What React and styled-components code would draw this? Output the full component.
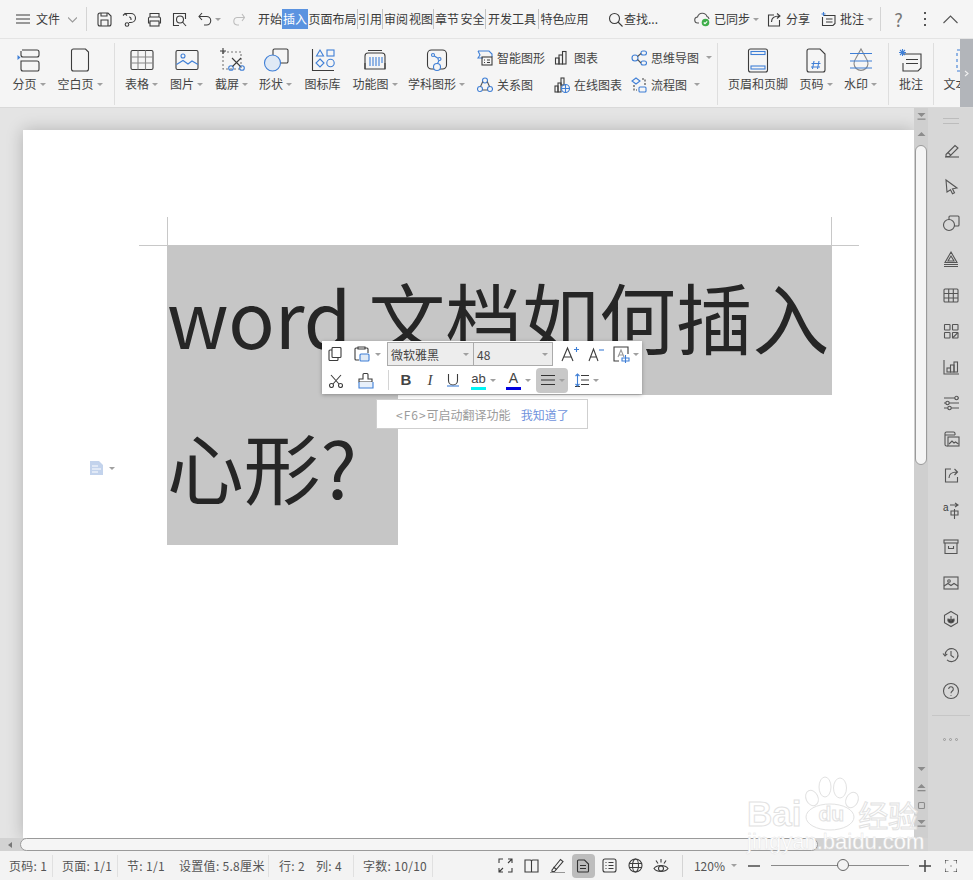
import React from "react";
import styled, { createGlobalStyle } from "styled-components";

const BLUE = "#3f7fd6";
const FONT = `"Noto Sans CJK SC", "Noto Sans", sans-serif`;

const GlobalStyle = createGlobalStyle`
  html, body { margin: 0; padding: 0; height: 100%; }
  body { font-family: ${FONT}; font-size: 12px; color: #3a3a3a; overflow: hidden; }
  #root { height: 100%; }
`;

const Window = styled.div`
  position: relative;
  width: 973px;
  height: 880px;
  display: flex;
  flex-direction: column;
  overflow: hidden;
  background: #f5f5f5;
`;

const IconSvg = styled.svg`
  display: block;
  flex: none;
  fill: none;
  stroke: ${(p) => p.$c || "#3c3c3c"};
  stroke-width: ${(p) => p.$sw || 1.1};
`;
const Ic = ({ s = 16, c, sw, children }) => (
  <IconSvg width={s} height={s} viewBox={`0 0 ${s} ${s}`} $c={c} $sw={sw}>
    {children}
  </IconSvg>
);

const Caret = styled.span`
  flex: none;
  display: inline-block;
  width: 0;
  height: 0;
  margin-left: ${(p) => p.$ml ?? 3}px;
  border-left: 3px solid transparent;
  border-right: 3px solid transparent;
  border-top: 3px solid #a0a0a0;
`;

/* title bar */
const TopBar = styled.div`
  height: 38px;
  flex: none;
  display: flex;
  align-items: center;
  padding-left: 16px;
  padding-right: 15px;
  border-bottom: 1px solid #e4e4e4;
  background: #f5f5f5;
`;
const Gap = styled.span`
  flex: none;
  width: ${(p) => p.$w}px;
  height: ${(p) => p.$h || 0}px;
`;
const VRule = styled.span`
  flex: none;
  width: 1px;
  height: ${(p) => p.$h || 24}px;
  background: #d4d4d4;
`;
const TopText = styled.span`
  line-height: 18px;
  white-space: nowrap;
  color: ${(p) => p.$c || "#3a3a3a"};
`;
const HelpMark = styled.span`
  flex: none;
  width: 13px;
  text-align: center;
  font-size: 18px;
  line-height: 20px;
  color: #777;
`;
const MoreDots = styled.span`
  flex: none;
  width: 4px;
  display: flex;
  flex-direction: column;
  align-items: center;
  gap: 4px;
`;
const MoreDot = styled.span`
  width: 2px;
  height: 2px;
  background: #555;
`;
const QuickIcons = styled.div`
  display: flex;
  gap: 10px;
`;
const Tabs = styled.div`
  display: flex;
  align-items: center;
`;
const Tab = styled.span`
  width: ${(p) => p.$w}px;
  height: 20px;
  line-height: 20px;
  text-align: center;
  white-space: nowrap;
  box-sizing: border-box;
  color: ${(p) => (p.$active ? "#fff" : "#3a3a3a")};
  background: ${(p) => (p.$active ? "#5b93e0" : "transparent")};
  border-right: ${(p) => (p.$sep ? "1px solid #c4c4c4" : "none")};
`;
const TopRight = styled.div`
  margin-left: auto;
  display: flex;
  align-items: center;
`;

/* ribbon */
const Ribbon = styled.div`
  position: relative;
  height: 69px;
  flex: none;
  display: flex;
  padding-left: 8px;
  overflow: hidden;
  background: #f5f5f5;
  border-bottom: 1px solid #d9d9d9;
  box-sizing: border-box;
`;
const RibbonRule = styled.span`
  flex: none;
  width: 1px;
  height: 62px;
  margin: 4px ${(p) => p.$r}px 0 ${(p) => p.$l}px;
  background: #dedede;
`;
const LargeBtn = styled.div`
  flex: none;
  width: ${(p) => p.$w}px;
  padding-top: 8px;
  display: flex;
  flex-direction: column;
  align-items: center;
`;
const LargeLabel = styled.span`
  margin-top: 2px;
  height: 18px;
  line-height: 18px;
  display: flex;
  align-items: center;
  white-space: nowrap;
  color: #444;
`;
const SmallGrid = styled.div`
  flex: none;
  display: grid;
  grid-template-columns: 77px 77px 81px;
  grid-auto-rows: 27px;
  padding: 5px 0 0 7px;
`;
const SmallBtn = styled.div`
  display: flex;
  align-items: center;
  gap: 4px;
  white-space: nowrap;
  color: #444;
`;
const RibbonNext = styled.div`
  position: absolute;
  top: 0;
  right: 0;
  bottom: 0;
  width: 13px;
  display: flex;
  align-items: center;
  justify-content: center;
  background: #b2b5ba;
`;

/* work area */
const Main = styled.div`
  flex: 1;
  min-height: 0;
  display: flex;
`;
const Center = styled.div`
  flex: 1;
  min-width: 0;
  display: flex;
  flex-direction: column;
`;
const CenterTop = styled.div`
  flex: 1;
  min-height: 0;
  display: flex;
`;
const DocArea = styled.div`
  flex: 1;
  min-width: 0;
  padding: 22px 0 0 23px;
  overflow: hidden;
  background: #e4e4e4;
`;
const Page = styled.div`
  position: relative;
  height: 100%;
  padding: 115px 0 0 144px;
  box-sizing: border-box;
  background: #fff;
  box-shadow: 0 0 16px rgba(0, 0, 0, 0.22);
`;
const Selection = styled.div`
  position: relative;
  width: 665px;
  font-size: 76.8px;
  line-height: 142px;
  color: #262626;
  white-space: nowrap;
`;
const SelLine = styled.div`
  width: ${(p) => p.$w}px;
  height: 150px;
  background: #c6c6c6;
`;
const CropMark = styled.span`
  position: absolute;
  background: #c8c8c8;
  top: ${(p) => p.$top}px;
  left: ${(p) => p.$left}px;
  width: ${(p) => p.$w}px;
  height: ${(p) => p.$h}px;
`;
const ParaMark = styled.div`
  position: absolute;
  left: 67px;
  top: 331px;
  display: flex;
  align-items: center;
`;

/* floating toolbar */
const Float = styled.div`
  position: absolute;
  left: 299px;
  top: 211px;
  width: 320px;
  height: 53px;
  box-sizing: border-box;
  padding-left: 6px;
  display: flex;
  flex-direction: column;
  background: #fff;
  box-shadow: 0 1px 4px rgba(0, 0, 0, 0.3);
`;
const FloatRow = styled.div`
  height: 26px;
  display: flex;
  align-items: center;
`;
const Select = styled.div`
  width: ${(p) => p.$w}px;
  height: 24px;
  box-sizing: border-box;
  padding: 0 4px 0 3px;
  display: flex;
  align-items: center;
  justify-content: space-between;
  background: #ededed;
  border: 1px solid #ababab;
  border-left-width: ${(p) => (p.$joined ? 0 : 1)}px;
  color: #444;
`;
const ToolGlyph = styled.span`
  flex: none;
  width: 14px;
  text-align: center;
  font-family: ${(p) => (p.$bold ? `"Liberation Sans", sans-serif` : `"Liberation Serif", serif`)};
  font-size: 15px;
  line-height: 18px;
  color: #444;
  font-weight: ${(p) => (p.$bold ? 700 : 400)};
  font-style: ${(p) => (p.$italic ? "italic" : "normal")};
`;
const ColorTool = styled.span`
  flex: none;
  width: 15px;
  height: 19px;
  box-sizing: border-box;
  text-align: center;
  font-family: "Liberation Sans", sans-serif;
  font-size: ${(p) => p.$fs || 14}px;
  line-height: 15px;
  color: #444;
  border-bottom: 3px solid ${(p) => p.$bar};
`;
const ActiveTool = styled.span`
  flex: none;
  width: 32px;
  height: 25px;
  box-sizing: border-box;
  padding-left: 5px;
  display: flex;
  align-items: center;
  border-radius: 4px;
  background: #c8c8c8;
`;
const Hint = styled.div`
  position: absolute;
  left: 353px;
  top: 269px;
  width: 212px;
  height: 30px;
  box-sizing: border-box;
  padding-left: 19px;
  display: flex;
  align-items: center;
  background: #fff;
  border: 1px solid #cfcfcf;
  color: #9b9b9b;
  white-space: nowrap;
`;
const HintKey = styled.span`
  letter-spacing: 1px;
`;
const HintLink = styled.span`
  margin-left: 10px;
  color: #6f92dc;
`;

/* scroll bars */
const VScroll = styled.div`
  flex: none;
  width: 14px;
  display: flex;
  flex-direction: column;
  align-items: center;
  background: #cfcfcf;
`;
const VThumb = styled.div`
  width: 12px;
  height: 320px;
  margin-top: 6px;
  flex: none;
  box-sizing: border-box;
  border: 1px solid #9a9a9a;
  border-radius: 7px;
  background: #f5f5f5;
`;
const VArrows = styled.div`
  margin-top: auto;
  padding-bottom: 10px;
  display: flex;
  flex-direction: column;
  align-items: center;
  gap: 9px;
`;
const HScroll = styled.div`
  height: 13px;
  flex: none;
  display: flex;
  align-items: center;
  padding-left: 7px;
  background: #d2d2d2;
`;
const HThumb = styled.div`
  width: 798px;
  height: 13px;
  margin-left: 7px;
  box-sizing: border-box;
  border: 1px solid #9a9a9a;
  border-radius: 7px;
  background: #f5f5f5;
`;

/* right side bar */
const SideBar = styled.div`
  flex: none;
  width: 45px;
  display: flex;
  flex-direction: column;
  align-items: center;
  background: #d7d7d7;
`;
const SideHandle = styled.div`
  width: 16px;
  height: 4px;
  margin: 10px 0 18px;
  border-top: 1px solid #bcbcbc;
  border-bottom: 1px solid #bcbcbc;
`;
const SideIcons = styled.div`
  display: flex;
  flex-direction: column;
  align-items: center;
  gap: 18px;
`;
const SideRule = styled.div`
  width: 38px;
  height: 1px;
  margin: 15px 0 22px;
  background: #c6c6c6;
`;
const SideDots = styled.div`
  display: flex;
  gap: 3px;
`;
const SideDot = styled.span`
  width: 3px;
  height: 3px;
  box-sizing: border-box;
  border: 1px solid #999;
  border-radius: 50%;
`;

/* status bar */
const StatusBar = styled.div`
  height: 29px;
  flex: none;
  display: flex;
  align-items: center;
  background: #f3f3f3;
  color: #555;
`;
const StatusCell = styled.span`
  flex: none;
  width: ${(p) => p.$w}px;
  height: 22px;
  line-height: 22px;
  box-sizing: border-box;
  padding-left: ${(p) => p.$l ?? 9}px;
  letter-spacing: 0.3px;
  white-space: nowrap;
  border-right: ${(p) => (p.$sep ? "1px solid #e0e0e0" : "none")};
`;
const StatusRight = styled.div`
  margin-left: auto;
  padding-right: 16px;
  display: flex;
  align-items: center;
`;
const ViewBtn = styled.span`
  flex: none;
  width: ${(p) => (p.$active ? 23 : 15)}px;
  height: ${(p) => (p.$active ? 24 : 16)}px;
  display: flex;
  align-items: center;
  justify-content: center;
  border-radius: 4px;
  background: ${(p) => (p.$active ? "#bdbdbd" : "transparent")};
`;
const Slider = styled.div`
  position: relative;
  width: 138px;
  height: 1px;
  background: #8a8a8a;
`;
const SliderKnob = styled.span`
  position: absolute;
  left: 66px;
  top: -6px;
  width: 12px;
  height: 12px;
  box-sizing: border-box;
  border: 1px solid #666;
  border-radius: 50%;
  background: #f3f3f3;
`;

/* watermark */
const Watermark = styled.div`
  position: absolute;
  left: 747px;
  top: 775px;
  width: 172px;
  height: 78px;
  pointer-events: none;
`;
const WmLine = styled.div`
  position: relative;
  display: flex;
  align-items: center;
  height: 30px;
  margin-top: 24px;
`;
const WmText = styled.span`
  font-family: ${(p) => p.$font || `"Liberation Sans", sans-serif`};
  font-size: ${(p) => p.$fs}px;
  font-weight: ${(p) => p.$weight || 700};
  line-height: 30px;
  color: #fff;
  white-space: nowrap;
  -webkit-text-stroke: 1px #e2e2e2;
`;
const WmUrl = styled.div`
  position: relative;
  margin-top: 2px;
  font-family: "Liberation Sans", sans-serif;
  font-size: 22px;
  line-height: 22px;
  color: #fff;
  white-space: nowrap;
  -webkit-text-stroke: 0.4px #e2e2e2;
`;
const WmPaw = styled.svg`
  position: absolute;
  left: 50px;
  top: 0;
`;

const Tri = ({ up, double }) => (
  <Ic s={9} c="none">
    <path d={up ? "M4.5 2l4 4h-8z" : "M4.5 6l4-4h-8z"} fill="#8c8c8c" transform={double ? "translate(0 -1)" : undefined} />
    {double && <rect x="0.5" y={up ? 7 : 6.5} width="8" height="1.3" fill="#8c8c8c" />}
  </Ic>
);

const scissors = (
  <>
    <circle cx="3.5" cy="12.5" r="2" />
    <circle cx="12.5" cy="12.5" r="2" />
    <path d="M5 11L13 2M11 11L3 2" />
  </>
);

const sideIcons = [
  <><path d="M3 15h14" /><path d="M4 12.5L13 3.5l3 2.5-8.5 8.5H4z" /><path d="M6 10.5l3 3" /></>,
  <path d="M4 2l11 8-4.5.8 2 4-2 1-2-4L5 14z" />,
  <><rect x="7" y="2" width="10" height="10" rx="1" /><circle cx="7" cy="11" r="5.5" fill="#d7d7d7" /></>,
  <><path d="M9 2l6 10.5H3z" /><path d="M9 6l3 5H6z" /><path d="M2 14.5h14M2 16.5h14" /></>,
  <><rect x="2" y="3" width="14" height="13" rx="1" /><path d="M2 7.5h14M2 12h14M6.7 3v13M11.3 3v13" /></>,
  <><rect x="2.5" y="2.5" width="5.5" height="5.5" rx=".5" /><rect x="10.5" y="2.5" width="5.5" height="5.5" rx=".5" /><rect x="2.5" y="10.5" width="5.5" height="5.5" rx=".5" /><rect x="10.5" y="10.5" width="5.5" height="5.5" rx=".5" /><path d="M10.5 16l5.5-5.5" /></>,
  <><path d="M2 2v14h15" /><rect x="5" y="10" width="3.5" height="4" /><rect x="8.5" y="7" width="3.5" height="7" /><rect x="12" y="4" width="3.5" height="10" /></>,
  <><path d="M2 4h11M16 4h1M2 9h2M7 9h10M2 14h4M9 14h8" /><circle cx="14.5" cy="4" r="1.7" /><circle cx="5.5" cy="9" r="1.7" /><circle cx="7.5" cy="14" r="1.7" /></>,
  <><path d="M3 5V3.5A1.5 1.5 0 0 1 4.500 2h7A1.500 1.500 0 0 1 13 3.500V5M3 5v9.500A1.500 1.500 0 0 0 4.500 16H6M3 5h10" /><rect x="6" y="7" width="11" height="9" /><path d="M7 14l3-3 2 2 1.500-1 3 2" /></>,
  <><path d="M9 3H3.500v13h12v-5" /><path d="M7 12c0-4 3-6 8-6M12.500 3l3 3-3 3" /></>,
  <><text x="1" y="9" fontSize="10" stroke="none" fill="#3c3c3c" fontFamily="Liberation Sans">a</text><path d="M8 3h8M13 1l3 2-3 2M9 9h7v4H9zM12.500 7v10" /></>,
  <><rect x="2" y="2" width="14" height="3" /><path d="M3 5v10.500h12V5M6.500 8v2.500h5V8" /></>,
  <><rect x="2" y="3" width="14" height="12" /><circle cx="7" cy="7" r="1.300" /><path d="M2 12l4-2.500 3 2 3-2 4 2.500" /></>,
  <><path d="M9 1.500l6.500 3.700v7.600L9 16.500l-6.500-3.700V5.200z" /><path d="M9 13c-2.500 0-3.500-2-3-4 1.500 0 2.500.8 3 2 .5-1.200 1.500-2 3-2 .5 2-.5 4-3 4zM9 6v4" fill="#3c3c3c" /></>,
  <><path d="M3 9a6.500 6.500 0 1 1 2 4.800" /><path d="M1 7.500L3 10l2.300-2.200M9 5v4.500l3 2" /></>,
  <><circle cx="9" cy="9" r="7.500" /><path d="M6.700 7a2.300 2.300 0 1 1 3.600 2c-.9.6-1.300 1-1.300 2.200M9 13v.8" /></>,
];

function App() {
  return (
    <Window>
      <GlobalStyle />
      <TopBar>
        <Ic s={14}><path d="M0 3h14M0 7h14M0 11h14" /></Ic>
        <Gap $w={6} />
        <TopText>文件</TopText>
        <Gap $w={8} />
        <Ic s={9} c="#999"><path d="M0 2.500l4.500 4.500L9 2.500" /></Ic>
        <Gap $w={9} />
        <VRule />
        <Gap $w={10} />
        <QuickIcons>
          <Ic s={15}><path d="M1 3a2 2 0 0 1 2-2h8l3 3v8a2 2 0 0 1-2 2H3a2 2 0 0 1-2-2zM4 1v3h6V1M4 14V8h7v6" /></Ic>
          <Ic s={15}><path d="M3 1.500h6a4.500 4.500 0 0 1 0 9H7M1 3.500l2-2 2 2" /><circle cx="5" cy="12.500" r="1.800" /><path d="M7 5a2 2 0 0 1 2 2v1" /></Ic>
          <Ic s={15}><path d="M3 5V1.500h9V5M3 11H1.500V6.500a1.500 1.500 0 0 1 1.500-1.500h9a1.500 1.500 0 0 1 1.500 1.500V11H12" /><rect x="3" y="9" width="9" height="5" /></Ic>
          <Ic s={15}><path d="M7 13.500H1.500v-12h12V7" /><circle cx="8" cy="7.500" r="3.500" /><path d="M10.500 10l3.500 4" /></Ic>
        </QuickIcons>
        <Gap $w={11} />
        <Ic s={14}><path d="M4 1L1 4.500 4 8" /><path d="M1 4.500h7.500a4.200 4.200 0 0 1 0 8.500H6" /></Ic>
        <Caret />
        <Gap $w={11} />
        <Ic s={13} c="#bdbdbd"><path d="M10 1l2.500 3.500L10 8" /><path d="M12.500 4.500H5a3.800 3.800 0 0 0 0 7.500h2" /></Ic>
        <Gap $w={13} />
        <Tabs>
          <Tab $w={24}>开始</Tab>
          <Tab $w={26} $active>插入</Tab>
          <Tab $w={50} $sep>页面布局</Tab>
          <Tab $w={25} $sep>引用</Tab>
          <Tab $w={26}>审阅</Tab>
          <Tab $w={25} $sep>视图</Tab>
          <Tab $w={26}>章节</Tab>
          <Tab $w={26} $sep>安全</Tab>
          <Tab $w={53} $sep>开发工具</Tab>
          <Tab $w={51}>特色应用</Tab>
        </Tabs>
        <Gap $w={18} />
        <Ic s={15}><circle cx="6.500" cy="6.500" r="5" /><path d="M10 10l4.500 4.500" /></Ic>
        <Gap $w={1} />
        <TopText>查找...</TopText>
        <TopRight>
          <Ic s={16} c="#555">
            <path d="M5 12H4a3 3 0 0 1-.5-6A5 5 0 0 1 13 5.500a3 3 0 0 1 2 2.500" />
            <circle cx="11.500" cy="11.500" r="3.800" fill="#3fae4a" stroke="none" />
            <path d="M9.800 11.500l1.200 1.200 2.200-2.300" stroke="#fff" />
          </Ic>
          <Gap $w={4} />
          <TopText>已同步</TopText>
          <Caret />
          <Gap $w={8} />
          <Ic s={15}><path d="M7 3H1.500v11h11V8" /><path d="M4.500 10c0-4 2.500-6 8-6M10 1.500l3 2.500-3 2.500" /></Ic>
          <Gap $w={4} />
          <TopText>分享</TopText>
          <Gap $w={11} />
          <Ic s={15}><path d="M3 3.500h11v8l-2 2H1.500V5M5 7h6.500M5 10h6.500" /><path d="M2.500 0v4M.5 2h4" stroke={BLUE} /></Ic>
          <Gap $w={4} />
          <TopText>批注</TopText>
          <Caret />
          <Gap $w={7} />
          <VRule />
          <Gap $w={11} />
          <HelpMark>?</HelpMark>
          <Gap $w={18} />
          <MoreDots>
            <MoreDot />
            <MoreDot />
            <MoreDot />
          </MoreDots>
          <Gap $w={16} />
          <Ic s={15} c="#555"><path d="M0.500 11l7-7 7 7" /></Ic>
        </TopRight>
      </TopBar>

      <Ribbon>
        <LargeBtn $w={42}>
          <Ic s={26}>
            <path d="M6 3h15a2 2 0 0 1 2 2v3a2 2 0 0 1-2 2H7a2 2 0 0 1-2-2V4" />
            <path d="M5 14h16a2 2 0 0 1 2 2v6a2 2 0 0 1-1 2H7a2 2 0 0 1-2-2z" />
            <path d="M1.500 8l3 2.500-3 2.500z" fill={BLUE} stroke="none" />
          </Ic>
          <LargeLabel>分页<Caret /></LargeLabel>
        </LargeBtn>
        <LargeBtn $w={60}>
          <Ic s={26}><path d="M4.500 4a2 2 0 0 1 2-2h12l3 3v17a2 2 0 0 1-2 2h-13a2 2 0 0 1-2-2z" /></Ic>
          <LargeLabel>空白页<Caret /></LargeLabel>
        </LargeBtn>
        <RibbonRule $l={4} $r={5} />
        <LargeBtn $w={43}>
          <Ic s={26}>
            <rect x="2" y="3.500" width="22" height="19" rx="1.500" />
            <path d="M2 10h22M2 16h22M9 3.500v19M16.500 3.500v19" stroke="#888" />
          </Ic>
          <LargeLabel>表格<Caret /></LargeLabel>
        </LargeBtn>
        <LargeBtn $w={47}>
          <Ic s={26}>
            <rect x="2" y="3.500" width="22" height="19" rx="1.500" />
            <circle cx="9" cy="9" r="2" stroke={BLUE} />
            <path d="M2.500 17.500l6.500-4 5 3.500 4-3 6 3.500" stroke={BLUE} />
          </Ic>
          <LargeLabel>图片<Caret /></LargeLabel>
        </LargeBtn>
        <LargeBtn $w={43}>
          <Ic s={26}>
            <rect x="4" y="5" width="18" height="17" strokeDasharray="2 2" stroke="#777" />
            <path d="M4 1v6M1 4h6" />
            <circle cx="12" cy="21" r="2.300" stroke={BLUE} />
            <circle cx="23" cy="21" r="2.300" stroke={BLUE} />
            <path d="M13.500 19.500L22 11M21.500 19.500L13 11" />
          </Ic>
          <LargeLabel>截屏<Caret /></LargeLabel>
        </LargeBtn>
        <LargeBtn $w={45}>
          <Ic s={26}>
            <path d="M10 9V3.500A1.500 1.500 0 0 1 11.500 2h12A1.500 1.500 0 0 1 25 3.500v11a1.500 1.500 0 0 1-1.500 1.500H18" />
            <circle cx="9.500" cy="16" r="8" fill="#dfe9f5" stroke={BLUE} />
          </Ic>
          <LargeLabel>形状<Caret /></LargeLabel>
        </LargeBtn>
        <LargeBtn $w={49}>
          <Ic s={26}>
            <path d="M2.500 2v21.500H24" />
            <path d="M10 3l3.500 6h-7z" stroke={BLUE} />
            <rect x="17" y="3" width="7" height="6" stroke={BLUE} />
            <path d="M10 12l4 4-4 4-4-4z" stroke={BLUE} />
            <circle cx="20.500" cy="16" r="3.700" stroke={BLUE} />
          </Ic>
          <LargeLabel>图标库</LargeLabel>
        </LargeBtn>
        <LargeBtn $w={56}>
          <Ic s={26}>
            <path d="M3 22v-13a3 3 0 0 1 3-3h14a3 3 0 0 1 3 3v13" />
            <path d="M3 16v6h20v-6M6 3.500h14" />
            <path d="M8 10v9M11 10v9M14 10v9M17 10v9M20 10v6" stroke={BLUE} />
          </Ic>
          <LargeLabel>功能图<Caret /></LargeLabel>
        </LargeBtn>
        <LargeBtn $w={67}>
          <Ic s={26}>
            <rect x="3.500" y="3" width="19" height="19" rx="4" />
            <circle cx="9" cy="8" r="1.500" stroke={BLUE} />
            <circle cx="15.500" cy="12" r="1.500" stroke={BLUE} />
            <circle cx="13" cy="20" r="3.500" fill="#f5f5f5" stroke={BLUE} />
            <path d="M10.300 9L14 11.200M15 13.500L13.500 16.500" stroke={BLUE} />
          </Ic>
          <LargeLabel>学科图形<Caret /></LargeLabel>
        </LargeBtn>

        <SmallGrid>
          <SmallBtn>
            <Ic s={16}>
              <path d="M1 1h11l3 3v3M1 1l2 4-2 3h5" stroke={BLUE} />
              <rect x="5" y="7" width="10" height="8" />
              <path d="M7 10h1M10 10h3M7 12.500h1M10 12.500h3" />
            </Ic>
            智能图形
          </SmallBtn>
          <SmallBtn>
            <Ic s={16}>
              <rect x="1.500" y="8" width="3.500" height="6" />
              <rect x="5" y="5" width="3.500" height="9" />
              <rect x="8.500" y="1.500" width="3.500" height="12.500" />
            </Ic>
            图表
          </SmallBtn>
          <SmallBtn>
            <Ic s={16} c={BLUE}>
              <circle cx="4" cy="8" r="3" />
              <rect x="10" y="1" width="5.500" height="4" rx="2" />
              <rect x="10" y="11" width="5.500" height="4" rx="2" />
              <path d="M6.500 6.500L10 3.500M6.500 9.500L10 13" stroke="#555" />
            </Ic>
            思维导图<Caret />
          </SmallBtn>
          <SmallBtn>
            <Ic s={16} c={BLUE}>
              <circle cx="8" cy="3.500" r="2.500" />
              <circle cx="3" cy="12" r="2.500" />
              <circle cx="13" cy="12" r="2.500" />
              <path d="M5.800 4.500L3.500 9.500M10.200 4.500L12.500 9.500M5.500 13h5" stroke="#555" />
            </Ic>
            关系图
          </SmallBtn>
          <SmallBtn>
            <Ic s={16}>
              <rect x="1" y="9" width="3" height="6" />
              <rect x="4" y="6" width="3" height="9" />
              <rect x="7" y="1" width="3" height="7" />
              <circle cx="11.500" cy="11.500" r="4" stroke={BLUE} />
              <path d="M7.500 11.500h8M11.500 7.500v8" stroke={BLUE} />
            </Ic>
            在线图表
          </SmallBtn>
          <SmallBtn>
            <Ic s={16}>
              <path d="M5 1l4 3-4 3-4-3z" stroke={BLUE} />
              <rect x="8" y="10" width="7" height="5" rx="1" stroke={BLUE} />
              <path d="M11 2h3v6M3 8v5h3" strokeDasharray="2 1.500" />
            </Ic>
            流程图<Caret />
          </SmallBtn>
        </SmallGrid>
        <RibbonRule $l={5} $r={4} />
        <LargeBtn $w={72}>
          <Ic s={26}>
            <rect x="3.500" y="2" width="19" height="23" rx="2" />
            <rect x="6" y="4.500" width="14" height="3" stroke={BLUE} />
            <rect x="6" y="19" width="14" height="3" stroke={BLUE} />
          </Ic>
          <LargeLabel>页眉和页脚</LargeLabel>
        </LargeBtn>
        <LargeBtn $w={44}>
          <Ic s={26}>
            <path d="M4 4a2 2 0 0 1 2-2h11l5 5v16a2 2 0 0 1-2 2H6a2 2 0 0 1-2-2z" />
            <path d="M11 14l-1.500 8M16 14l-1.500 8M8.500 16.500h9M8 20h9" stroke={BLUE} />
          </Ic>
          <LargeLabel>页码<Caret /></LargeLabel>
        </LargeBtn>
        <LargeBtn $w={45}>
          <Ic s={26} c="#888">
            <path d="M13 2l5.500 10a7 7 0 1 1-11 0z" />
            <path d="M2 6.500h22M2 14h22M2 21h22" stroke={BLUE} />
          </Ic>
          <LargeLabel>水印<Caret /></LargeLabel>
        </LargeBtn>
        <RibbonRule $l={5} $r={4} />
        <LargeBtn $w={36}>
          <Ic s={26}>
            <path d="M5 7h18v14l-3 3H5v-8M8 12.500h12M8 16.500h12" />
            <path d="M4.500 2v7M1 5.500h7M2 3l5 5M7 3l-5 5" stroke={BLUE} />
          </Ic>
          <LargeLabel>批注</LargeLabel>
        </LargeBtn>
        <RibbonRule $l={4} $r={4} />
        <LargeBtn $w={56}>
          <Ic s={26}><rect x="4" y="3" width="18" height="21" strokeDasharray="3 3" stroke={BLUE} /></Ic>
          <LargeLabel>文本框<Caret /></LargeLabel>
        </LargeBtn>
        <RibbonNext>
          <Ic s={7} c="#f0f0f0"><path d="M2 1l3 2.500-3 2.500" /></Ic>
        </RibbonNext>
      </Ribbon>

      <Main>
        <Center>
          <CenterTop>
            <DocArea>
              <Page>
                <Selection>
                  <CropMark $top={-28} $left={0} $w={1} $h={28} />
                  <CropMark $top={0} $left={-28} $w={28} $h={1} />
                  <CropMark $top={-28} $left={664} $w={1} $h={28} />
                  <CropMark $top={0} $left={664} $w={28} $h={1} />
                  <SelLine $w={665}>word 文档如何插入</SelLine>
                  <SelLine $w={231}>心形?</SelLine>
                </Selection>
                <ParaMark>
                  <Ic s={14} c="none">
                    <path d="M0 0h9l4 4v10H0z" fill="#c3d3ec" />
                    <path d="M2 5h6M2 8h9M2 11h6" stroke="#fff" />
                  </Ic>
                  <Caret $ml={5} />
                </ParaMark>
                <Float>
                  <FloatRow>
                    <Ic s={14}><rect x="4" y="0.500" width="9" height="10" rx="1" /><path d="M4 3H2a1 1 0 0 0-1 1v8.500a1 1 0 0 0 1 1h7a1 1 0 0 0 1-1V11" /></Ic>
                    <Gap $w={12} />
                    <Ic s={16}><path d="M4 2H2a1 1 0 0 0-1 1v10a1 1 0 0 0 1 1h3M11 2h2a1 1 0 0 1 1 1v4M4 1h7v2H4z" /><rect x="6" y="8" width="9" height="7" rx="1" stroke={BLUE} fill="#dfe9f5" /></Ic>
                    <Caret $ml={5} />
                    <Gap $w={6} />
                    <Select $w={87}>微软雅黑<Caret /></Select>
                    <Select $w={79} $joined>48<Caret /></Select>
                    <Gap $w={8} />
                    <Ic s={18}><path d="M1 16L6.500 3 12 16M3 12h7" /><path d="M13 4.500h5M15.500 2v5" stroke={BLUE} /></Ic>
                    <Gap $w={9} />
                    <Ic s={16}><path d="M1 15L5.500 3 10 15M2.500 11h6" /><path d="M11 4h5" stroke={BLUE} /></Ic>
                    <Gap $w={9} />
                    <Ic s={17}><path d="M6 15H1V1h14v7" /><path d="M5 11l3-7 3 7M6 9h4" stroke="#999" /><path d="M9 12h7v3H9zM12.500 9v8" stroke={BLUE} /></Ic>
                    <Caret $ml={3} />
                  </FloatRow>
                  <FloatRow>
                    <Ic s={15}>{scissors}</Ic>
                    <Gap $w={14} />
                    <Ic s={17}>
                      <path d="M6 7V2.500a1 1 0 0 1 1-1h3a1 1 0 0 1 1 1V7h4v3H2V7z" />
                      <path d="M2 10v6h14v-6" stroke={BLUE} fill="#e8f0fa" />
                    </Ic>
                    <Gap $w={14} />
                    <VRule $h={20} />
                    <Gap $w={10} />
                    <ToolGlyph $bold>B</ToolGlyph>
                    <Gap $w={10} />
                    <ToolGlyph $italic>I</ToolGlyph>
                    <Gap $w={9} />
                    <Ic s={14}><path d="M2.500 1v6.500a4.500 4.500 0 0 0 9 0V1" /><path d="M1 13h12" stroke={BLUE} /></Ic>
                    <Gap $w={11} />
                    <ColorTool $bar="#00f5f5" $fs={13}>ab</ColorTool>
                    <Caret $ml={4} />
                    <Gap $w={10} />
                    <ColorTool $bar="#0000e0">A</ColorTool>
                    <Caret $ml={4} />
                    <Gap $w={5} />
                    <ActiveTool>
                      <Ic s={14} c="#333"><path d="M0 2.500h14M0 7h14M0 11.500h14" /></Ic>
                      <Caret $ml={4} />
                    </ActiveTool>
                    <Gap $w={7} />
                    <Ic s={14}><path d="M6 2.500h8M6 7h8M6 11.500h8M0 13.500h5" /><path d="M2.500 1v12M.5 3l2-2 2 2M.5 11l2 2 2-2" stroke={BLUE} /></Ic>
                    <Caret $ml={4} />
                  </FloatRow>
                </Float>
                <Hint>
                  <HintKey>&lt;F6&gt;</HintKey>可启动翻译功能
                  <HintLink>我知道了</HintLink>
                </Hint>
              </Page>
            </DocArea>
            <VScroll>
              <Gap $w={0} $h={4} />
              <Tri double />
              <Gap $w={0} $h={9} />
              <Tri up />
              <VThumb />
              <VArrows>
                <Tri />
                <Tri up double />
                <Ic s={9} c="#8c8c8c"><rect x="1.500" y="1.500" width="6" height="6" rx="1" /></Ic>
                <Tri double />
              </VArrows>
            </VScroll>
          </CenterTop>
          <HScroll>
            <Ic s={6} c="none"><path d="M5 0v6L1 3z" fill="#777" /></Ic>
            <HThumb />
          </HScroll>
        </Center>
        <SideBar>
          <SideHandle />
          <SideIcons>
            {sideIcons.map((icon, i) => (
              <Ic key={i} s={18} c="#555">{icon}</Ic>
            ))}
          </SideIcons>
          <SideRule />
          <SideDots>
            <SideDot />
            <SideDot />
            <SideDot />
          </SideDots>
        </SideBar>
      </Main>

      <StatusBar>
        <StatusCell $w={53} $sep>页码: 1</StatusCell>
        <StatusCell $w={65} $sep>页面: 1/1</StatusCell>
        <StatusCell $w={61}>节: 1/1</StatusCell>
        <StatusCell $w={90} $l={0} $sep>设置值: 5.8厘米</StatusCell>
        <StatusCell $w={47} $l={10}>行: 2</StatusCell>
        <StatusCell $w={38} $l={0} $sep>列: 4</StatusCell>
        <StatusCell $w={79} $sep>字数: 10/10</StatusCell>
        <StatusRight>
          <ViewBtn><Ic s={15}><path d="M5 1H1v4M10 1h4v4M5 14H1v-4M14 10v4h-4M1.500 13.500l3.500-3.500M13.500 1.500L10 5" /></Ic></ViewBtn>
          <Gap $w={11} />
          <ViewBtn><Ic s={15}><path d="M7.500 3v11H1V2h5a1.500 1.500 0 0 1 1.500 1zM7.500 3A1.500 1.500 0 0 1 9 2h5v12H7.500" /></Ic></ViewBtn>
          <Gap $w={11} />
          <ViewBtn><Ic s={15}><path d="M0 15h15M2 12l8.500-10.500 2.500 2L4.500 13.500H2z" /><path d="M3.500 9l3 2.500" /></Ic></ViewBtn>
          <Gap $w={7} />
          <ViewBtn $active><Ic s={14} c="#333"><path d="M1.500 2a1 1 0 0 1 1-1h6l4 4v7a1 1 0 0 1-1 1h-9a1 1 0 0 1-1-1zM4 6.500h6M4 9.500h6" /></Ic></ViewBtn>
          <Gap $w={7} />
          <ViewBtn><Ic s={15}><rect x="1" y="1" width="13" height="13" rx="2" /><path d="M3.500 4.500h1M6.500 4.500h5M3.500 7.500h1M6.500 7.500h5M3.500 10.500h1M6.500 10.500h5" /></Ic></ViewBtn>
          <Gap $w={11} />
          <ViewBtn><Ic s={15}><circle cx="7.500" cy="7.500" r="6.500" /><ellipse cx="7.500" cy="7.500" rx="3" ry="6.500" /><path d="M1 5.500h13M1 9.500h13" /></Ic></ViewBtn>
          <Gap $w={11} />
          <ViewBtn><Ic s={16}><path d="M1 10.500c3-4 11-4 14 0-3 4-11 4-14 0z" /><circle cx="8" cy="10.500" r="2.500" /><path d="M8 1v3.500M3 2.500L5 5.500M13 2.500L11 5.500" /></Ic></ViewBtn>
          <Gap $w={13} />
          <VRule $h={22} />
          <Gap $w={11} />
          <TopText $c="#555">120%</TopText>
          <Caret $ml={6} />
          <Gap $w={11} />
          <Ic s={12} c="#555" sw={1.6}><path d="M0 6h12" /></Ic>
          <Gap $w={11} />
          <Slider><SliderKnob /></Slider>
          <Gap $w={10} />
          <Ic s={12} c="#444" sw={1.5}><path d="M0 6h12M6 0v12" /></Ic>
          <Gap $w={14} />
          <Ic s={12}><path d="M0 3.500V1a1 1 0 0 1 1-1h2.500M8.500 0H11a1 1 0 0 1 1 1v2.500M12 8.500V11a1 1 0 0 1-1 1H8.500M3.500 12H1a1 1 0 0 1-1-1V8.500M5.500 6h1" /></Ic>
        </StatusRight>
      </StatusBar>

      <Watermark>
        <WmPaw width="70" height="60" viewBox="0 0 70 60" fill="#fff" stroke="#e2e2e2">
          <ellipse cx="15" cy="23" rx="6" ry="8" transform="rotate(-25 15 23)" />
          <ellipse cx="28" cy="12" rx="6" ry="10" />
          <ellipse cx="43" cy="13" rx="6.500" ry="10" />
          <ellipse cx="55" cy="25" rx="6" ry="8" transform="rotate(25 55 25)" />
          <ellipse cx="33" cy="42" rx="24" ry="13" />
        </WmPaw>
        <WmLine>
          <WmText $fs={35}>Bai</WmText>
          <Gap $w={17} />
          <WmText $fs={21}>du</WmText>
          <Gap $w={14} />
          <WmText $fs={30} $font={FONT} $weight={400}>经验</WmText>
        </WmLine>
        <WmUrl>jingyan.baidu.com</WmUrl>
      </Watermark>
    </Window>
  );
}

export default App;
